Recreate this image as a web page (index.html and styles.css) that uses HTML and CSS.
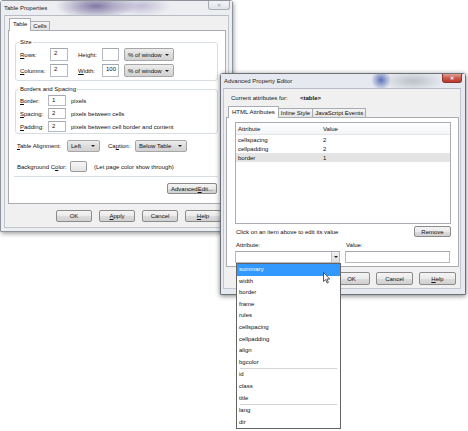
FILE: index.html
```html
<!DOCTYPE html>
<html lang="en">
<head>
<meta charset="UTF-8">
<title>Table Properties</title>
<link rel="stylesheet" href="styles.css">
</head>
<body>
<div class="desk">

  <!-- Table Properties (inactive, behind) -->
  <div class="win tp">
    <div class="titlebar">
      <span class="title">Table Properties</span>
      <span class="close">&#x2715;</span>
    </div>
    <div class="client">
      <div class="tabs">
        <div class="tab active">Table</div>
        <div class="tab">Cells</div>
      </div>
      <div class="panel">
        <fieldset class="group">
          <legend>Size</legend>
          <div class="size-grid">
            <span><u>R</u>ows:</span>
            <span class="field w18">2</span>
            <span>Height:</span>
            <span class="field w17"></span>
            <span class="combo">% of window</span>

            <span><u>C</u>olumns:</span>
            <span class="field w18">2</span>
            <span><u>W</u>idth:</span>
            <span class="field w17">100</span>
            <span class="combo">% of window</span>
          </div>
        </fieldset>

        <fieldset class="group">
          <legend>Borders and Spacing</legend>
          <div class="border-grid">
            <span><u>B</u>order:</span>
            <span class="field w18">1</span>
            <span>pixels</span>

            <span><u>S</u>pacing:</span>
            <span class="field w18">2</span>
            <span>pixels between cells</span>

            <span><u>P</u>adding:</span>
            <span class="field w18">2</span>
            <span>pixels between cell border and content</span>
          </div>
        </fieldset>

        <div class="align-row">
          <span class="lbl-align"><u>T</u>able Alignment:</span>
          <span class="combo c-left">Left</span>
          <span class="lbl-caption">Ca<u>p</u>tion:</span>
          <span class="combo c-caption">Below Table</span>
        </div>

        <div class="bg-row">
          <span class="lbl-bg">Background C<u>o</u>lor:</span>
          <span class="color-btn"></span>
          <span class="bg-note">(Let page color show through)</span>
        </div>

        <div class="sep"></div>

        <span class="btn adv">Advanced <u>E</u>dit...</span>
      </div>

      <div class="buttons">
        <span class="btn">OK</span>
        <span class="btn"><u>A</u>pply</span>
        <span class="btn">Cancel</span>
        <span class="btn"><u>H</u>elp</span>
      </div>
    </div>
  </div>

  <!-- Advanced Property Editor (active) -->
  <div class="win ape">
    <div class="titlebar">
      <span class="title">Advanced Property Editor</span>
      <span class="close red">&#x2715;</span>
    </div>
    <div class="client">
      <div class="cur">
        <span class="cur-lbl">Current attributes for:</span>
        <b>&lt;table&gt;</b>
      </div>
      <div class="tabs">
        <div class="tab active">HTML Attributes</div>
        <div class="tab">Inline Style</div>
        <div class="tab">JavaScript Events</div>
      </div>
      <div class="panel">
        <div class="listbox">
          <div class="lv-head">
            <span class="col1">Attribute</span>
            <span>Value</span>
          </div>
          <div class="lv-row"><span class="col1">cellspacing</span><span>2</span></div>
          <div class="lv-row"><span class="col1">cellpadding</span><span>2</span></div>
          <div class="lv-row sel"><span class="col1">border</span><span>1</span></div>
        </div>

        <div class="info-row">
          <span>Click on an item above to edit its value</span>
          <span class="btn remove">Remove</span>
        </div>

        <div class="edit-grid">
          <span class="elbl">Attribute:</span>
          <span class="elbl">Value:</span>
          <span class="field edit-combo"><span class="arrow-btn"></span></span>
          <span class="field"></span>
        </div>
      </div>

      <div class="buttons">
        <span class="btn">OK</span>
        <span class="btn">Cancel</span>
        <span class="btn"><u>H</u>elp</span>
      </div>
    </div>
  </div>

  <!-- open attribute dropdown -->
  <div class="dropdown">
    <div class="item hl">summary</div>
    <div class="item">width</div>
    <div class="item">border</div>
    <div class="item">frame</div>
    <div class="item">rules</div>
    <div class="item">cellspacing</div>
    <div class="item">cellpadding</div>
    <div class="item">align</div>
    <div class="item">bgcolor</div>
    <div class="dd-sep"></div>
    <div class="item">id</div>
    <div class="item">class</div>
    <div class="item">title</div>
    <div class="dd-sep"></div>
    <div class="item">lang</div>
    <div class="item">dir</div>
  </div>

  <svg class="cursor" width="8" height="12" viewBox="0 0 8 12">
    <path d="M0.5 0.5 L0.5 9.5 L2.6 7.6 L4.1 11 L5.4 10.4 L3.9 7.1 L6.8 7.1 Z" fill="#fff" stroke="#333" stroke-width="0.8" stroke-linejoin="round"/>
  </svg>

</div>
</body>
</html>
```

FILE: styles.css
```css
body {
  margin: 0;
  background: #fff;
  color: #111;
  font-family: 'Liberation Sans', Arial, sans-serif;
  font-size: 6px;
  line-height: 8px;
}

.desk {
  position: relative;
  width: 468px;
  height: 431px;
  overflow: hidden;
}

u {
  text-decoration-thickness: 0.5px;
  text-underline-offset: 1px;
}

/* ---- window frame ---- */

.win {
  position: absolute;
  box-sizing: border-box;
  display: flex;
  flex-direction: column;
  border: 1px solid #8e939b;
  border-radius: 3px 3px 1px 1px;
  background: #eceef2;
}

.win.tp {
  left: 0;
  top: 0;
  width: 233px;
  height: 232px;
  box-shadow: 1px 2px 4px rgba(0, 0, 0, 0.35);
}

.win.ape {
  left: 220px;
  top: 73px;
  width: 246px;
  height: 222px;
  border-color: #6c7077;
  background: #e6eaf0;
  box-shadow: 0 1px 5px rgba(0, 0, 0, 0.5);
}

.titlebar {
  display: flex;
  height: 14px;
  flex: none;
}

.tp .titlebar {
  background:
    radial-gradient(ellipse 40px 13px at 95px 5px, rgba(110, 100, 150, 0.85), rgba(110, 100, 150, 0)),
    radial-gradient(ellipse 30px 10px at 140px 5px, rgba(150, 140, 185, 0.5), rgba(150, 140, 185, 0)),
    #eceef2;
}

.ape .titlebar {
  background:
    radial-gradient(circle 10px at 160px 6px, rgba(45, 70, 165, 0.75), rgba(45, 70, 165, 0)),
    radial-gradient(ellipse 30px 10px at 192px 7px, rgba(110, 112, 125, 0.35), rgba(110, 112, 125, 0)),
    #e6eaf0;
}

.title {
  padding: 3px 0 0 3px;
  color: #222;
}

.close {
  margin-left: auto;
  margin-right: 2px;
  width: 22px;
  height: 9px;
  box-sizing: border-box;
  border: 1px solid #a9aeb6;
  border-top: none;
  border-radius: 0 0 3px 3px;
  background: linear-gradient(#f3f4f6, #e2e4e8);
  color: #9a9ea6;
  font-size: 5px;
  line-height: 8px;
  text-align: center;
}

.close.red {
  margin-right: 3px;
  width: 20px;
  border-color: #8a3230;
  background: linear-gradient(#e4a093, #cb5b4c 50%, #b9392b);
  color: #fff;
  font-weight: bold;
}

.client {
  flex: 1;
  display: flex;
  flex-direction: column;
  background: #f0f0f0;
  border: 1px solid #c2c6cd;
  border-top-color: #b8bcc4;
}

.tp .client {
  margin: 0 3px 3px 3px;
}

.ape .client {
  margin: 0 4px 5px 2px;
}

/* ---- tabs ---- */

.tabs {
  display: flex;
  align-items: flex-end;
  flex: none;
}

.tp .tabs {
  margin: 2px 0 0 4px;
}

.ape .tabs {
  margin: 4px 0 0 4px;
}

.tab {
  box-sizing: border-box;
  height: 9px;
  padding: 0 2px;
  border: 1px solid #a9adb3;
  border-bottom: none;
  border-left: none;
  background: linear-gradient(#f4f4f4, #e3e3e3);
  line-height: 8px;
  white-space: nowrap;
}

.tab.active {
  position: relative;
  height: 13px;
  margin-bottom: -1px;
  padding: 0 3px;
  border-left: 1px solid #a9adb3;
  background: #fff;
  line-height: 11px;
}

.ape .tab.active {
  height: 12px;
  line-height: 10px;
}

.panel {
  box-sizing: border-box;
  display: flex;
  flex-direction: column;
  background: #fff;
  border: 1px solid #a9adb3;
  flex: none;
}

.tp .panel {
  height: 174px;
  margin: 0 2px 0 3px;
}

.ape .panel {
  height: 150px;
  margin: 0 1px 0 2px;
}

/* ---- controls ---- */

.field {
  box-sizing: border-box;
  display: block;
  height: 100%;
  padding-left: 3px;
  background: #fff;
  border: 1px solid #b5b9c1;
  border-top-color: #a3a7af;
  line-height: inherit;
}

.w18 { width: 18px; }
.w17 { width: 17px; }

.combo {
  box-sizing: border-box;
  display: flex;
  align-items: center;
  height: 100%;
  padding-left: 3px;
  border: 1px solid #a6a6a6;
  border-radius: 2px;
  background: linear-gradient(#eeeeee, #dcdcdc 50%, #d2d2d2);
  white-space: nowrap;
}

.combo::after {
  content: "";
  margin-left: auto;
  margin-right: 4px;
  border-left: 2px solid transparent;
  border-right: 2px solid transparent;
  border-top: 2px solid #222;
}

.btn {
  box-sizing: border-box;
  display: flex;
  align-items: center;
  justify-content: center;
  border: 1px solid #8b8b8b;
  border-radius: 2px;
  background: linear-gradient(#f4f4f4, #eaeaea 50%, #dcdcdc 51%, #d0d0d0);
  white-space: nowrap;
}

/* ---- Table Properties content ---- */

.group {
  margin: 7px 7px 0 6px;
  padding: 2px 4px 3px 4px;
  min-width: 0;
  border: 1px solid #d6dde3;
  border-radius: 3px;
}

.group + .group {
  margin-top: 4px;
  padding-bottom: 1px;
}

.group legend {
  margin-left: -1px;
  padding: 0 1px;
  line-height: 8px;
}

.size-grid {
  display: grid;
  grid-template-columns: 30px 28px 24px 22px 50px;
  grid-auto-rows: 13px;
  row-gap: 3px;
  align-items: center;
}

.border-grid {
  display: grid;
  grid-template-columns: 28px 23px auto;
  grid-auto-rows: 11px;
  row-gap: 2px;
  align-items: center;
}

.align-row,
.bg-row {
  display: flex;
  align-items: center;
  padding-left: 8px;
}

.align-row {
  height: 12px;
  margin-top: 6px;
}

.lbl-align { width: 50px; }
.c-left { width: 33px; }
.lbl-caption { width: 27px; margin-left: 8px; }
.c-caption { width: 52px; }

.bg-row {
  height: 11px;
  margin-top: 9px;
}

.lbl-bg { width: 53px; }

.color-btn {
  box-sizing: border-box;
  width: 17px;
  height: 100%;
  border: 1px solid #9a9a9a;
  border-radius: 2px;
  background: linear-gradient(#f6f6f6, #e4e4e4);
}

.bg-note { margin-left: 7px; }

.sep {
  height: 1px;
  margin: 4px 7px 0 5px;
  background: #d6dde3;
}

.adv {
  align-self: flex-end;
  width: 50px;
  height: 11px;
  margin: 6px 8px 0 0;
}

.buttons {
  display: flex;
  justify-content: flex-end;
  gap: 7px;
  flex: none;
}

.tp .buttons {
  height: 12px;
  margin-top: 6px;
  padding-right: 7px;
}

.tp .buttons .btn { width: 36px; }

.ape .buttons {
  height: 13px;
  margin-top: 5px;
  padding-right: 4px;
  gap: 6px;
}

.ape .buttons .btn { width: 37px; }

/* ---- Advanced Property Editor content ---- */

.cur {
  display: flex;
  margin-top: 5px;
  padding-left: 7px;
}

.cur-lbl { width: 69px; }

.listbox {
  box-sizing: border-box;
  width: 216px;
  height: 102px;
  margin: 4px 0 0 8px;
  border: 1px solid #a9adb3;
}

.lv-head,
.lv-row {
  display: flex;
  padding-left: 2px;
}

.lv-head {
  height: 12px;
  box-sizing: border-box;
  align-items: center;
  border-bottom: 1px solid #e3e5e8;
  background: linear-gradient(#fff, #f3f4f6);
}

.lv-row {
  height: 9px;
  align-items: center;
}

.lv-row.sel { background: #e4e4e4; }

.col1 { width: 85px; }

.info-row {
  display: flex;
  align-items: center;
  height: 13px;
  margin-top: 1px;
  padding: 0 7px 0 9px;
}

.remove {
  margin-left: auto;
  width: 37px;
  height: 11px;
}

.edit-grid {
  display: grid;
  grid-template-columns: 105px 105px;
  grid-template-rows: 8px 12px;
  column-gap: 5px;
  row-gap: 2px;
  margin-top: 3px;
  padding-left: 8px;
}

.elbl { padding-left: 1px; }

.edit-combo {
  display: flex;
  justify-content: flex-end;
  padding: 0;
}

.arrow-btn {
  box-sizing: border-box;
  display: flex;
  align-items: center;
  justify-content: center;
  width: 8px;
  height: 100%;
  border-left: 1px solid #c4c4c4;
  background: linear-gradient(#f2f2f2, #dedede);
}

.arrow-btn::after {
  content: "";
  border-left: 2px solid transparent;
  border-right: 2px solid transparent;
  border-top: 2px solid #222;
}

/* ---- dropdown list ---- */

.dropdown {
  position: absolute;
  left: 236px;
  top: 263px;
  width: 105px;
  height: 166px;
  box-sizing: border-box;
  border: 1px solid #646464;
  background: #fff;
}

.item {
  height: 11.6px;
  line-height: 11.6px;
  padding-left: 2px;
}

.item.hl {
  background: #3399ff;
  color: #fff;
}

.dd-sep {
  height: 1px;
  margin: 0 3px;
  background: #d4d4d4;
}

.cursor {
  position: absolute;
  left: 323px;
  top: 272px;
}
```
